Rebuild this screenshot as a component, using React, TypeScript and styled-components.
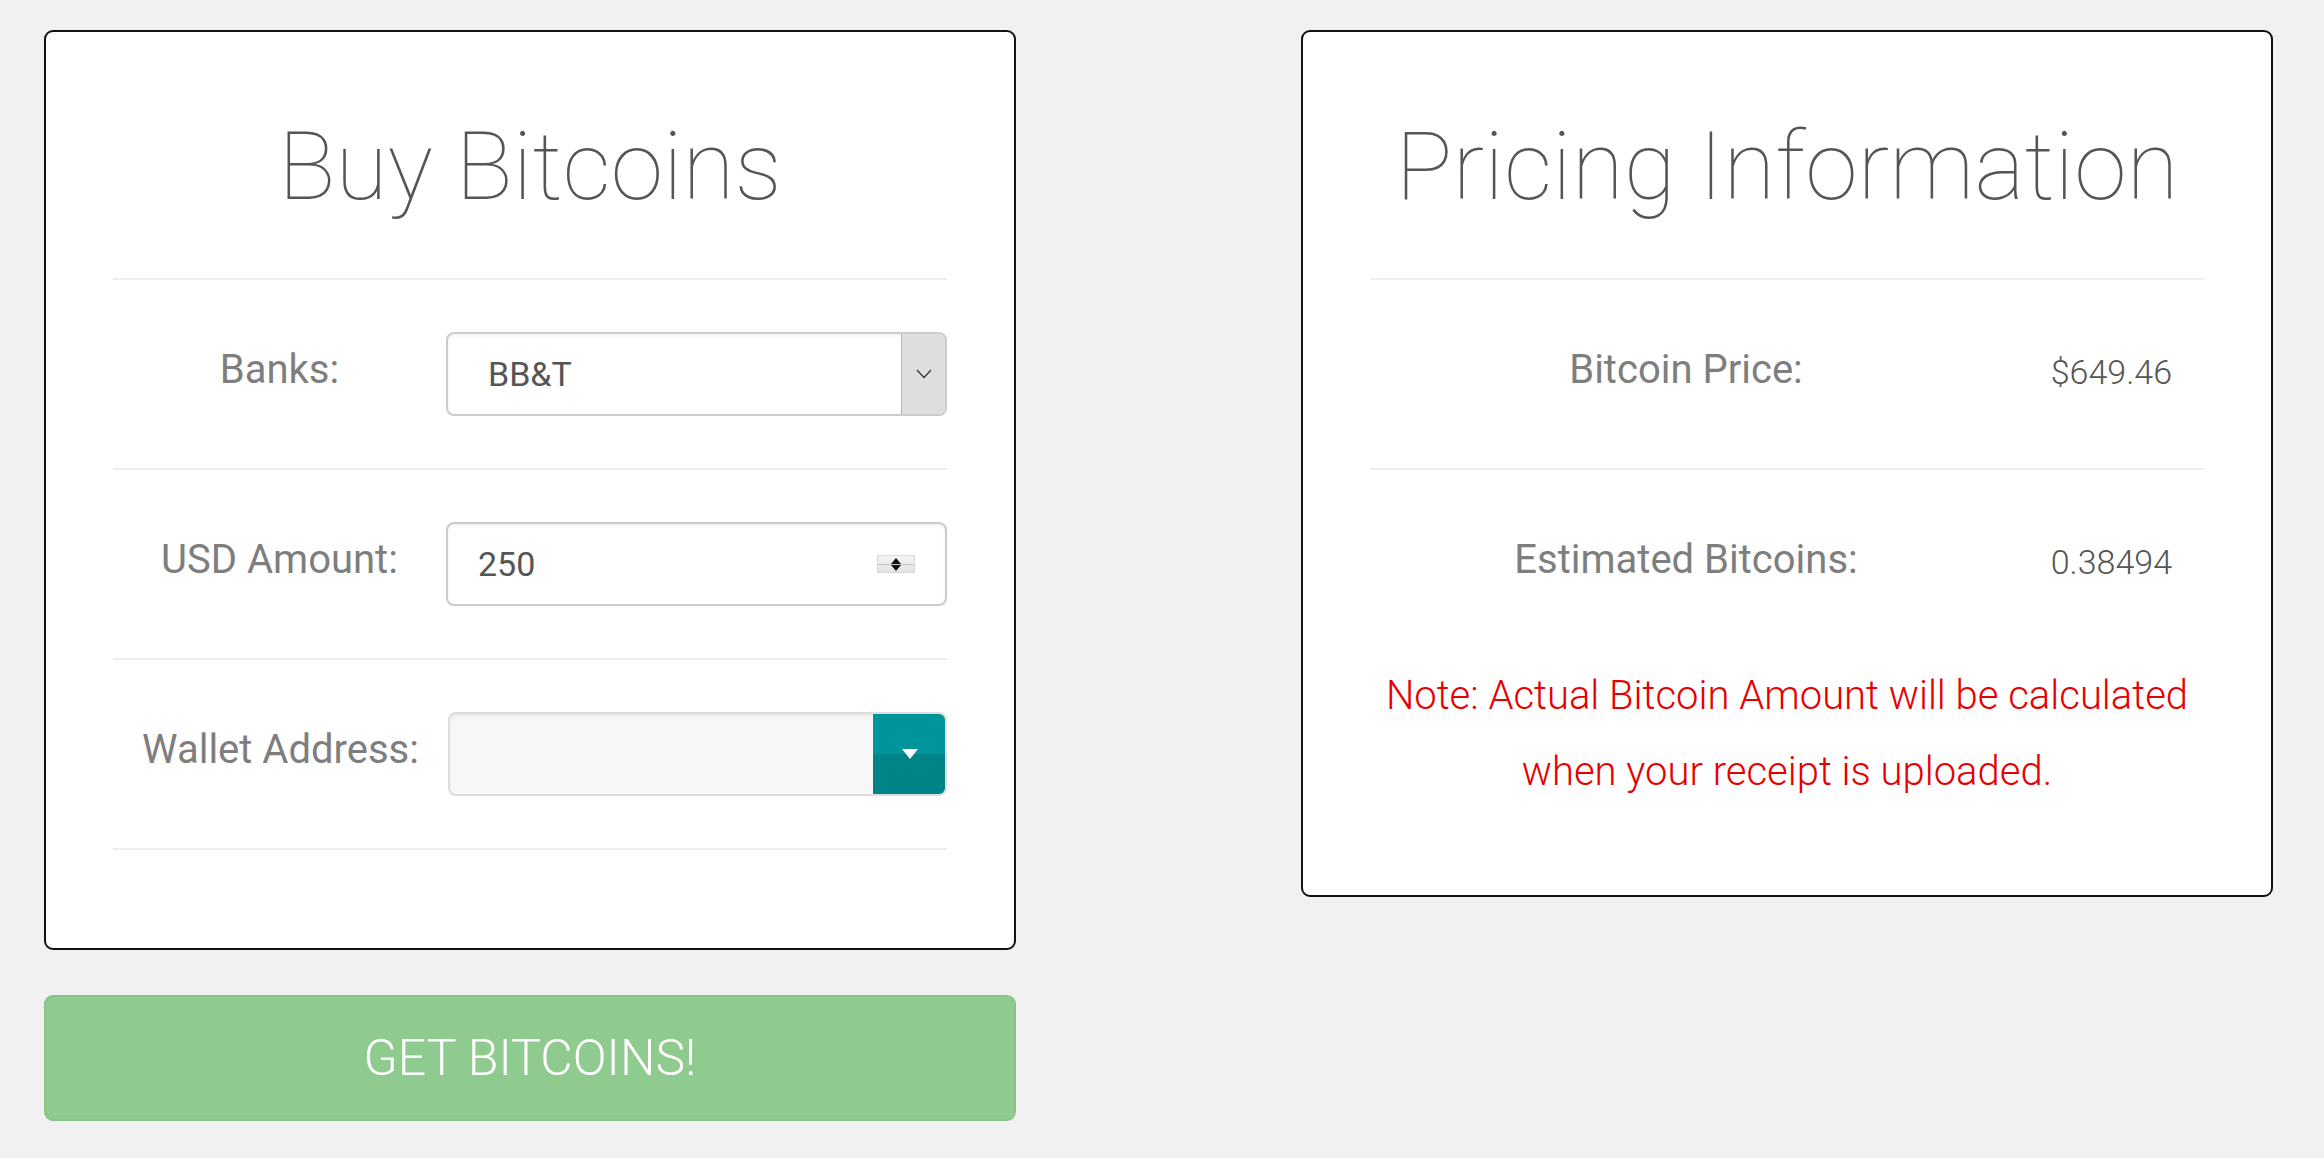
import React from "react";
import styled, { createGlobalStyle } from "styled-components";

const Global = createGlobalStyle`
  html, body { margin: 0; padding: 0; background: #f1f1f1; }
  body { font-family: Roboto, "Liberation Sans", Arial, sans-serif; }
  * { box-sizing: border-box; }
`;

const Page = styled.div`
  display: grid;
  grid-template-columns: 972px 972px;
  column-gap: 285px;
  align-items: start;
  padding: 30px 0 0 44px;
  min-height: 1158px;
`;

const Column = styled.div`
  display: flex;
  flex-direction: column;
  gap: 45px;
`;

const Card = styled.section<{ $pb: number }>`
  background: #fff;
  border: 2px solid #111;
  border-radius: 9px;
  padding: 0 67px ${(p) => p.$pb}px;
`;

const Heading = styled.h1`
  margin: 82px 0 58px;
  font-size: 95px;
  font-weight: 100;
  line-height: 106px;
  color: #555;
  text-align: center;
`;

const Divider = styled.hr`
  margin: 0;
  border: 0;
  border-top: 2px solid #eeeeee;
`;

const Row = styled.div<{ $labelCol: number }>`
  display: grid;
  grid-template-columns: ${(p) => p.$labelCol}px 1fr;
  align-items: start;
  padding: 52px 0 52px;
  min-height: 188px;
`;

const Label = styled.label`
  display: block;
  padding-top: 14px;
  font-size: 40px;
  line-height: 47px;
  color: #7e7e7e;
  text-align: center;
`;

const FieldBox = styled.div<{ $bg?: string; $border?: string }>`
  position: relative;
  display: flex;
  align-items: center;
  height: 84px;
  border: 2px solid ${(p) => p.$border ?? "#cccccc"};
  border-radius: 8px;
  background: ${(p) => p.$bg ?? "#fff"};
  box-shadow: inset 0 2px 3px rgba(0, 0, 0, 0.06);
  overflow: hidden;
`;

const FieldText = styled.span<{ $pl: number }>`
  flex: 1;
  padding-left: ${(p) => p.$pl}px;
  font-size: 34px;
  color: #555;
  line-height: 1;
`;

const SelectArrow = styled.div`
  align-self: stretch;
  width: 44px;
  display: flex;
  align-items: center;
  justify-content: center;
  background: #dedede;
  border-left: 1px solid #b5b5b5;
`;

const Spinner = styled.div`
  width: 38px;
  height: 18px;
  margin-right: 30px;
  display: flex;
  flex-direction: column;
  border: 1px solid #d8d8d8;
  background: linear-gradient(#f4f4f4, #e2e2e2);
`;

const SpinHalf = styled.div<{ $down?: boolean }>`
  flex: 1;
  display: flex;
  align-items: ${(p) => (p.$down ? "flex-start" : "flex-end")};
  justify-content: center;
  border-top: ${(p) => (p.$down ? "1px solid #c4c4c4" : "0")};
`;

const TealButton = styled.div`
  align-self: stretch;
  width: 74px;
  margin: -2px -2px -2px 0;
  display: flex;
  align-items: center;
  justify-content: center;
  border-radius: 0 8px 8px 0;
  background: linear-gradient(#00959a 0%, #00959a 50%, #008487 50%, #008487 100%);
`;

const Value = styled.div`
  padding-top: 20px;
  padding-right: 32px;
  font-size: 34px;
  font-weight: 300;
  line-height: 40px;
  color: #555;
  text-align: right;
`;

const Note = styled.p`
  margin: 0;
  font-size: 40px;
  font-weight: 300;
  line-height: 76px;
  color: #e60000;
  text-align: center;
`;

const GetButton = styled.button`
  height: 126px;
  width: 100%;
  border: 2px solid #88c488;
  border-radius: 9px;
  background: #8fcb8f;
  color: #fff;
  font-family: Roboto, "Liberation Sans", Arial, sans-serif;
  font-size: 50px;
  font-weight: 300;
  cursor: pointer;
`;

export default function App() {
  return (
    <>
      <Global />
      <Page>
        <Column>
          <Card $pb={98}>
            <Heading>Buy Bitcoins</Heading>
            <Divider />
            <Row $labelCol={333}>
              <Label>Banks:</Label>
              <FieldBox>
                <FieldText $pl={40}>BB&amp;T</FieldText>
                <SelectArrow>
                  <svg width="16" height="10" viewBox="0 0 16 10">
                    <path d="M1 1 L8 8.5 L15 1" fill="none" stroke="#333" strokeWidth="1.2" />
                  </svg>
                </SelectArrow>
              </FieldBox>
            </Row>
            <Divider />
            <Row $labelCol={333}>
              <Label>USD Amount:</Label>
              <FieldBox>
                <FieldText $pl={30}>250</FieldText>
                <Spinner>
                  <SpinHalf>
                    <svg width="10" height="6" viewBox="0 0 10 6">
                      <path d="M5 0 L10 6 L0 6 Z" fill="#111" />
                    </svg>
                  </SpinHalf>
                  <SpinHalf $down>
                    <svg width="10" height="6" viewBox="0 0 10 6">
                      <path d="M0 0 L10 0 L5 6 Z" fill="#111" />
                    </svg>
                  </SpinHalf>
                </Spinner>
              </FieldBox>
            </Row>
            <Divider />
            <Row $labelCol={335}>
              <Label>Wallet Address:</Label>
              <FieldBox $bg="#f7f7f7" $border="#dddddd">
                <FieldText $pl={30} />
                <TealButton>
                  <svg width="16" height="10" viewBox="0 0 16 10">
                    <path d="M0 0 L16 0 L8 10 Z" fill="#fff" />
                  </svg>
                </TealButton>
              </FieldBox>
            </Row>
            <Divider />
          </Card>
          <GetButton>GET BITCOINS!</GetButton>
        </Column>
        <Column>
          <Card $pb={85}>
            <Heading>Pricing Information</Heading>
            <Divider />
            <Row $labelCol={632}>
              <Label>Bitcoin Price:</Label>
              <Value>$649.46</Value>
            </Row>
            <Divider />
            <Row $labelCol={632}>
              <Label>Estimated Bitcoins:</Label>
              <Value>0.38494</Value>
            </Row>
            <Note>
              Note: Actual Bitcoin Amount will be calculated
              <br />
              when your receipt is uploaded.
            </Note>
          </Card>
        </Column>
      </Page>
    </>
  );
}
